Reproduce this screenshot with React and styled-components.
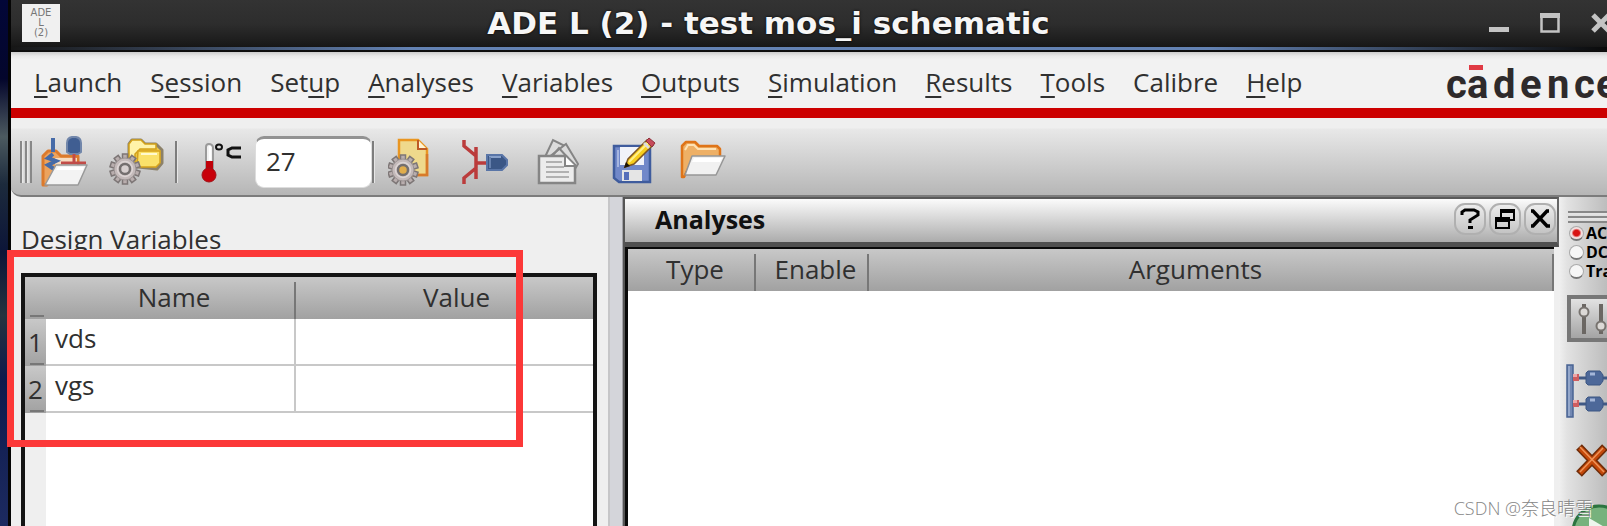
import React from "react";
// styles
import styled, { createGlobalStyle } from "styled-components";

const menus = [
    ["", "L", "aunch"],
    ["S", "e", "ssion"],
    ["Set", "u", "p"],
    ["", "A", "nalyses"],
    ["", "V", "ariables"],
    ["", "O", "utputs"],
    ["", "S", "imulation"],
    ["", "R", "esults"],
    ["", "T", "ools"],
    ["Calibre", "", ""],
    ["", "H", "elp"]
];

const variables = [
    { id: 1, name: "vds", value: "" },
    { id: 2, name: "vgs", value: "" }
];

const App = () => {
    return (
        <>
            <GlobalStyle />
            <Desktop>
                <Window>
                    <TitleBar>
                        <AppBadge>
                            ADE
                            <br />L<br />
                            (2)
                        </AppBadge>
                        <h1>ADE L (2) - test mos_i schematic</h1>
                        <WindowControls>
                            <button aria-label="Minimize">
                                <MinimizeIcon />
                            </button>
                            <button aria-label="Maximize">
                                <MaximizeIcon />
                            </button>
                            <button aria-label="Close">
                                <CloseIcon />
                            </button>
                        </WindowControls>
                    </TitleBar>
                    <MenuBar>
                        <Menus>
                            {menus.map(([before, key, after]) => (
                                <button key={before + key + after}>
                                    {before}
                                    {key && <u>{key}</u>}
                                    {after}
                                </button>
                            ))}
                        </Menus>
                        <Logo />
                    </MenuBar>
                    <Toolbar />
                    <Main>
                        <VariablesPanel />
                        <Splitter />
                        <AnalysesPanel />
                        <SideBar />
                    </Main>
                </Window>
                <Highlight />
                <Watermark>CSDN @奈良晴雪</Watermark>
            </Desktop>
        </>
    );
};

const Toolbar = () => (
    <ToolRow>
        <Grip />
        <Tool $width={68} aria-label="Open design">
            <DesignIcon />
        </Tool>
        <Tool $width={75} aria-label="Setup folder">
            <FolderGearIcon />
        </Tool>
        <Divider />
        <TempLabel htmlFor="temperature" aria-label="Temperature">
            <ThermometerIcon />
        </TempLabel>
        <TempInput id="temperature" defaultValue="27" />
        <Divider />
        <Tool $width={87} $start={13} aria-label="Setup analyses">
            <DocGearIcon />
        </Tool>
        <Tool $width={75} $start={0} aria-label="Edit variables">
            <PinIcon />
        </Tool>
        <Tool $width={75} $start={0} aria-label="Outputs">
            <StackIcon />
        </Tool>
        <Tool $width={68} $start={0} aria-label="Save state">
            <SaveIcon />
        </Tool>
        <Tool $width={68} $start={0} aria-label="Load state">
            <FolderIcon />
        </Tool>
    </ToolRow>
);

const VariablesPanel = () => (
    <Variables>
        <h2>Design Variables</h2>
        <VariablesFrame>
            <VariablesTable>
                <colgroup>
                    <col style={{ width: 21 }} />
                    <col style={{ width: 250 }} />
                    <col />
                </colgroup>
                <thead>
                    <tr>
                        <th className="corner"></th>
                        <th>Name</th>
                        <th className="last">Value</th>
                    </tr>
                </thead>
                <tbody>
                    {variables.map(row => (
                        <tr key={row.id}>
                            <th scope="row">{row.id}</th>
                            <td>{row.name}</td>
                            <td>{row.value}</td>
                        </tr>
                    ))}
                </tbody>
            </VariablesTable>
        </VariablesFrame>
    </Variables>
);

const AnalysesPanel = () => (
    <Analyses>
        <DockTitle>
            <h2>Analyses</h2>
            <DockButton aria-label="Help">
                <HelpIcon />
            </DockButton>
            <DockButton aria-label="Detach">
                <DetachIcon />
            </DockButton>
            <DockButton aria-label="Close">
                <CrossIcon />
            </DockButton>
        </DockTitle>
        <AnalysesFrame>
            <AnalysesTable>
                <colgroup>
                    <col style={{ width: 128 }} />
                    <col style={{ width: 113 }} />
                    <col />
                </colgroup>
                <thead>
                    <tr>
                        <th>Type</th>
                        <th>Enable</th>
                        <th className="arguments">Arguments</th>
                    </tr>
                </thead>
            </AnalysesTable>
        </AnalysesFrame>
    </Analyses>
);

const SideBar = () => (
    <Side>
        <SideGrip />
        <Radios>
            {["AC", "DC", "Tran"].map((kind, i) => (
                <label key={kind}>
                    <input type="radio" name="kind" defaultChecked={i === 0} />
                    {kind}
                </label>
            ))}
        </Radios>
        <SlidersButton aria-label="Edit sliders">
            <SlidersIcon />
        </SlidersButton>
        <SideButton aria-label="Edit outputs">
            <NetIcon />
        </SideButton>
        <SideButton $indent={10} aria-label="Delete">
            <DeleteIcon />
        </SideButton>
        <SideButton $indent={5} aria-label="Run">
            <RunIcon />
        </SideButton>
    </Side>
);

// icons
const MinimizeIcon = () => (
    <svg width="20" height="20" viewBox="0 0 20 20">
        <path d="M0 14h20v5H0z" fill="#c4c4c4" />
    </svg>
);

const MaximizeIcon = () => (
    <svg width="20" height="20" viewBox="0 0 20 20">
        <path d="M1.5 1v17.5h17V1" fill="none" stroke="#c4c4c4" strokeWidth="2.5" />
        <path d="M0 0h20v5H0z" fill="#c4c4c4" />
    </svg>
);

const CloseIcon = () => (
    <svg width="20" height="20" viewBox="0 0 20 20">
        <path d="M2 2l16 16M18 2L2 18" stroke="#c4c4c4" strokeWidth="5" />
    </svg>
);

const Logo = () => (
    <LogoSvg viewBox="0 0 190 40" role="img" aria-label="cadence">
        <text x="0 21 47 74 101 128 150" y="36">
            cadence
        </text>
        <path d="M23 3h14v5H23z" fill="#e03a44" />
    </LogoSvg>
);

const Gear = ({ x, y, hole }) => (
    <g transform={`translate(${x} ${y})`}>
        {[0, 36, 72, 108, 144].map(angle => (
            <path
                key={angle}
                d="M-2.5 -15h5v30h-5z"
                transform={`rotate(${angle})`}
                fill="#b9aeae"
                stroke="#7d7676"
                strokeWidth="1.5"
            />
        ))}
        <circle r="11" fill="#c4baba" stroke="#9a9292" />
        <circle r="5" fill={hole} stroke="#746f6f" strokeWidth="2.5" />
        <circle r="7.5" fill="none" stroke="#ddd5d5" strokeWidth="1.5" />
    </g>
);

const OpenFolder = () => (
    <>
        <path
            d="M2 36V5l4-4h9l4 4h18l3 3v10H13L4 36z"
            fill="#eeb066"
            stroke="#df7418"
            strokeWidth="2.5"
            strokeLinejoin="round"
        />
        <path d="M5 9l3-5h6l4 4h18" fill="none" stroke="#ffe2b4" strokeWidth="2" />
        <path
            d="M12 15h33l-9 19H5z"
            fill="#f1f1f1"
            stroke="#969696"
            strokeWidth="1.5"
            strokeLinejoin="round"
        />
        <path d="M14 17h28l-2 4H12z" fill="#fff" />
    </>
);

const FolderIcon = () => (
    <svg width="46" height="50" viewBox="0 -4 46 50">
        <OpenFolder />
    </svg>
);

const DesignIcon = () => (
    <svg width="48" height="52" viewBox="0 0 48 52">
        <path
            d="M2 49V20l5-5h8l5 5h17v12H16L6 49z"
            fill="#eca35e"
            stroke="#dc7a2c"
            strokeWidth="3"
            strokeLinejoin="round"
        />
        <path d="M14 22h22v8H14z" fill="#f7dcc0" />
        <path
            d="M12 2v14M12 18l-5 4 8 3-8 4 6 4"
            fill="none"
            stroke="#466ba8"
            strokeWidth="4"
        />
        <path
            d="M26 16V7q0-5 5-6h4q5 1 5 6v9l-3 2h-8z"
            fill="#405e92"
            stroke="#7186aa"
            strokeWidth="2"
        />
        <path d="M33 18v9M20 27h25" stroke="#c14c48" strokeWidth="3" />
        <path
            d="M15 29h31l-9 20H4z"
            fill="#f3f3f3"
            stroke="#999"
            strokeWidth="1.5"
            strokeLinejoin="round"
        />
        <path d="M17 31h26l-1 3H15z" fill="#fff" />
    </svg>
);

const FolderGearIcon = () => (
    <svg width="56" height="50" viewBox="0 0 56 50">
        <path
            d="M20 29V7l3-4h9l4 4h11l6 6v13l-5 6z"
            fill="#ecc747"
            stroke="#8c8169"
            strokeWidth="3"
            strokeLinejoin="round"
        />
        <path
            d="M20 28V7l3-4h9l4 4h11v5H31l-5 5v12z"
            fill="#fff3a8"
            stroke="#d2a118"
            strokeWidth="1.5"
        />
        <path
            d="M29 14h22v12l-4 4H28z"
            fill="#fbe16a"
            stroke="#d5a11c"
            strokeWidth="1.5"
        />
        <path d="M32 17h16" stroke="#fff9cf" strokeWidth="2" />
        <Gear x={16} y={32} hole="#d8d0d0" />
    </svg>
);

const ThermometerIcon = () => (
    <svg width="42" height="42" viewBox="0 0 42 42">
        <path
            d="M5 28V6q0-3 3-3t4 3v22z"
            fill="#f2f2f2"
            stroke="#9a9a9a"
            strokeWidth="2"
        />
        <path d="M5 20h7v10H5z" fill="#c00008" />
        <circle cx="8" cy="34" r="7" fill="#c8000a" stroke="#a01318" />
        <path d="M9 5v14" stroke="#fff" strokeWidth="2" />
        <ellipse cx="18" cy="6" rx="3" ry="2.5" fill="none" stroke="#111" strokeWidth="2" />
        <path
            d="M40 7H31l-4 2v5l4 2h9"
            fill="none"
            stroke="#111"
            strokeWidth="3"
        />
    </svg>
);

const DocGearIcon = () => (
    <svg width="44" height="50" viewBox="0 0 44 50">
        <path
            d="M11 3h19l9 9v26H11z"
            fill="#efd98c"
            stroke="#e99622"
            strokeWidth="2.5"
        />
        <path d="M30 3v9h9" fill="#fff4d4" stroke="#bd5a26" strokeWidth="2" />
        <path d="M39 17v21H24" fill="none" stroke="#d87a2a" strokeWidth="2.5" />
        <Gear x={15} y={33} hole="#e1ad4c" />
    </svg>
);

const PinIcon = () => (
    <svg width="48" height="50" viewBox="0 0 48 50">
        <path
            d="M2 3v6l12 10v12L2 41v6M14 10v32M14 26h12"
            fill="none"
            stroke="#bb3c3c"
            strokeWidth="3.5"
        />
        <path
            d="M25 18h15l5 5v5l-5 5H25z"
            fill="#3b5786"
            stroke="#5975a7"
            strokeWidth="2"
        />
        <path d="M27 20h12" stroke="#88a1ca" strokeWidth="2" />
        <path d="M28 20v11" stroke="#6781ad" strokeWidth="2" />
    </svg>
);

const StackIcon = () => (
    <svg width="44" height="50" viewBox="0 0 44 50">
        <g fill="#dcdcdc" stroke="#858585" strokeWidth="2">
            <path d="M8 20L16 3l14 7-6 14z" />
            <path d="M12 20L29 7l12 20-5 8z" />
            <path d="M16 18l6-7 9 10" fill="none" />
            <path d="M2 19h27l9 9v18H2z" fill="#ececec" strokeWidth="2.5" />
            <path d="M28 19v10h10" fill="#fff" />
        </g>
        <path d="M9 25h16M9 30h18M9 35h23M9 40h23" stroke="#b1b1b1" strokeWidth="2" />
    </svg>
);

const SaveIcon = () => (
    <svg width="44" height="50" viewBox="0 0 44 50">
        <path
            d="M2 9h36v36H7l-5-4z"
            fill="#7188c9"
            stroke="#3f5c9d"
            strokeWidth="2.5"
        />
        <path d="M8 10h24v18H8z" fill="#f1f3f9" />
        <path d="M6 13v17" stroke="#a6b6e0" strokeWidth="2" />
        <path d="M10 33h20v11H10z" fill="#e5e5e5" />
        <path d="M12 35h5v8h-5z" fill="#566fba" />
        <path d="M13 30l3-8L35 3l6 5-19 19z" fill="#f8cd1d" stroke="#7d5524" strokeWidth="1.5" />
        <path d="M17 25L36 6" stroke="#fff08a" strokeWidth="2" />
        <path d="M34 4l3-3 6 5-3 4z" fill="#c64a5a" stroke="#8f2f3c" />
        <path d="M31 7l2-2 5 5-2 2z" fill="#ddd" />
        <path d="M12 31l2-6 4 4z" fill="#1a1208" />
    </svg>
);

const HelpIcon = () => (
    <svg width="22" height="22" viewBox="0 0 22 22">
        <path
            d="M3 7V4l3-2h9l4 2v3l-8 5v3"
            fill="none"
            stroke="#000"
            strokeWidth="3"
        />
        <path d="M9 18h5v3H9z" />
    </svg>
);

const DetachIcon = () => (
    <svg width="22" height="22" viewBox="0 0 22 22">
        <path
            d="M7 9V2h13v10h-5M2 12v8h13v-8z"
            fill="none"
            stroke="#000"
            strokeWidth="2"
        />
        <path d="M6 1h15v4H6zM1 9h15v5H1z" />
    </svg>
);

const CrossIcon = () => (
    <svg width="22" height="22" viewBox="0 0 22 22">
        <path
            d="M2 3h2l14 15h3M20 3h-2L4 18H2"
            fill="none"
            stroke="#000"
            strokeWidth="3.5"
        />
    </svg>
);

const SlidersIcon = () => (
    <svg width="46" height="34" viewBox="0 0 46 34">
        <path d="M13 2v30M30 2v30" stroke="#6b6763" strokeWidth="4" />
        <circle cx="13" cy="10" r="4.5" fill="#dcd9d6" stroke="#77736f" strokeWidth="2" />
        <circle cx="30" cy="24" r="4.5" fill="#dcd9d6" stroke="#77736f" strokeWidth="2" />
    </svg>
);

const NetIcon = () => (
    <svg width="48" height="54" viewBox="0 0 48 54">
        <path d="M1 1h6v52H1z" fill="#7288b3" stroke="#4a6494" strokeWidth="1.5" />
        <path d="M3 2v50" stroke="#a2b3d3" strokeWidth="1.5" />
        {[14, 40].map(y => (
            <g key={y} transform={`translate(0 ${y})`}>
                <path d="M12 0h9M36 0h10" stroke="#405985" strokeWidth="3" />
                <path d="M7-4h6v7H7z" fill="#cf5d60" />
                <path d="M7-4h4v3H7z" fill="#eda6a8" />
                <path
                    d="M20-5l2-2h12l3 4v6l-3 4H22l-2-2z"
                    fill="#4d6899"
                    stroke="#3c5683"
                />
                <path d="M24-4h5" stroke="#a4b6d8" strokeWidth="3" />
            </g>
        ))}
    </svg>
);

const DeleteIcon = () => (
    <svg width="34" height="34" viewBox="0 0 34 34">
        <path d="M3 3l26 27M29 3L3 30" stroke="#6e2b08" strokeWidth="8" />
        <path d="M4 4l24 25M28 4L4 29" stroke="#c4480a" strokeWidth="5" />
        <path d="M4 3l24 25M27 4L4 28" stroke="#ee9358" strokeWidth="1.5" />
    </svg>
);

const RunIcon = () => (
    <svg width="56" height="56" viewBox="0 0 56 56">
        <circle cx="28" cy="28" r="26" fill="#77b27d" stroke="#2c7440" strokeWidth="3" />
        <path d="M18 14l24 14-24 14z" fill="#edf7ed" />
    </svg>
);

const GlobalStyle = createGlobalStyle`
    * {
        box-sizing: border-box;
        margin: 0;
    }
    body {
        overflow: hidden;
        background: #0b1330;
        color: #303030;
        font-family: "Open Sans", "Noto Sans", sans-serif;
        font-size: 26px;
    }
    button {
        padding: 0;
        border: none;
        background: none;
        color: inherit;
        font: inherit;
    }
    svg {
        display: block;
    }
`;

const Desktop = styled.div`
    position: relative;
    height: 100vh;
    padding-left: 8px;
    overflow: hidden;
    background: linear-gradient(
        #020638,
        #04062c 15%,
        #4c5a60 26%,
        #1c2a3c 35%,
        #0c1538 48%,
        #26343f 60%,
        #0e1a4c 72%,
        #1c2a60
    );
`;

const Window = styled.div`
    display: flex;
    flex-direction: column;
    height: 100%;
    border-left: 3px solid #050505;
    background: #efefef;
`;

const TitleBar = styled.header`
    display: flex;
    flex: none;
    align-items: center;
    height: 52px;
    padding: 0 0 6px 11px;
    background:
        linear-gradient(to right, #161616, #6382b3 25%, #6382b3 75%, #0a0a0a)
            0 47px / 100% 3px no-repeat,
        linear-gradient(#333 0, #2d2d2d 24px, #191919 45px, #0c0c0c 52px);
    color: #fff;
    h1 {
        flex: 1;
        padding-right: 12px;
        color: #f6f6f6;
        font-family: "DejaVu Sans", sans-serif;
        font-size: 31px;
        line-height: 40px;
        text-align: center;
        text-shadow: 0 0 3px #000;
    }
`;

const AppBadge = styled.div`
    width: 38px;
    height: 38px;
    padding-top: 4px;
    background: #f0f0f0;
    color: #777;
    font-family: "DejaVu Sans", sans-serif;
    font-size: 10px;
    line-height: 10px;
    text-align: center;
`;

const WindowControls = styled.div`
    display: flex;
    gap: 31px;
    margin-right: -4px;
`;

const MenuBar = styled.nav`
    display: flex;
    flex: none;
    align-items: center;
    justify-content: space-between;
    height: 66px;
    padding: 4px 0 0 23px;
    overflow: hidden;
    border-bottom: 10px solid #c00;
    background: linear-gradient(#ccc, #e9e9e9 4px, #f2f2f2 8px);
`;

const Menus = styled.div`
    display: flex;
    gap: 28px;
    u {
        text-decoration-thickness: 2px;
        text-decoration-skip-ink: none;
        text-underline-offset: 4px;
    }
`;

const LogoSvg = styled.svg`
    flex: none;
    width: 190px;
    height: 40px;
    margin-right: -29px;
    fill: #2e2a2b;
    font-family: Roboto, sans-serif;
    font-size: 40px;
    font-weight: bold;
`;

const ToolRow = styled.div`
    display: flex;
    flex: none;
    align-items: center;
    height: 79px;
    padding: 10px 0 0 9px;
    border-bottom: 2px solid #7c7c7c;
    border-bottom-left-radius: 10px;
    background: linear-gradient(#efefef 10px, #e8e8e8 11px, #b6b6b6);
`;

const Grip = styled.div`
    width: 12px;
    height: 42px;
    background: repeating-linear-gradient(
        to right,
        #888 0,
        #888 2px,
        #eee 2px,
        #ccc 5px
    );
`;

const Tool = styled.button`
    display: flex;
    width: ${props => props.$width}px;
    padding-left: ${props => props.$start ?? 9}px;
`;

const Divider = styled.div`
    width: 3px;
    height: 42px;
    border-right: 1px solid #e6e6e6;
    background: #7d7d7d;
`;

const TempLabel = styled.label`
    padding: 0 12px 0 23px;
`;

const TempInput = styled.input`
    width: 117px;
    height: 52px;
    padding: 0 10px 4px;
    border: 1px solid #ddd;
    border-top: 3px solid #929292;
    border-radius: 9px;
    background: #fff;
    color: #303030;
    font: inherit;
    outline: none;
`;

const Main = styled.main`
    display: flex;
    flex: 1;
    min-height: 0;
`;

const Variables = styled.section`
    display: flex;
    flex: none;
    flex-direction: column;
    width: 38%;
    max-width: 597px;
    padding: 24px 11px 0 10px;
    h2 {
        margin-bottom: 16px;
        font-size: 26px;
        font-weight: 400;
        line-height: 36px;
    }
`;

const VariablesFrame = styled.div`
    flex: 1;
    border: 4px solid #141414;
    border-bottom: none;
    background: linear-gradient(to right, #efefef 21px, #fff 21px);
`;

const VariablesTable = styled.table`
    width: 100%;
    border-collapse: separate;
    border-spacing: 0;
    table-layout: fixed;
    th {
        padding: 0 0 2px;
        font-weight: 400;
        line-height: 36px;
    }
    thead tr {
        height: 42px;
        background: linear-gradient(#c8c8c8, #a1a1a1);
    }
    thead th {
        padding-left: 6px;
        background: linear-gradient(#777, #777) 100% 100% / 2px 37px no-repeat;
    }
    thead .corner {
        padding-left: 0;
        background: linear-gradient(#777, #777) 5px 38px / 14px 2px no-repeat;
    }
    thead .last {
        padding-left: 24px;
        background: none;
    }
    tbody th {
        height: 47px;
        background:
            linear-gradient(#777, #777) 5px 44px / 14px 2px no-repeat,
            linear-gradient(#c8c8c8, #a1a1a1);
    }
    td {
        padding: 0 9px 7px;
        border-right: 2px solid #c8c8c8;
        border-bottom: 2px solid #c8c8c8;
        background: #fff;
        line-height: 36px;
    }
    td:last-child {
        border-right: none;
    }
`;

const Splitter = styled.div`
    flex: none;
    width: 15px;
    border-right: 1px solid #a2a2a8;
    border-left: 2px solid #c6c6c8;
    background: #d4d5da;
`;

const Analyses = styled.section`
    display: flex;
    flex: 1;
    flex-direction: column;
    min-width: 0;
    border-left: 2px solid #555;
`;

const DockTitle = styled.div`
    display: flex;
    align-items: center;
    gap: 3px;
    height: 50px;
    padding: 0 1px 4px 30px;
    border-top: 2px solid #5a5a5a;
    border-right: 2px solid #666;
    border-bottom: 5px solid #505050;
    background: linear-gradient(#fbfbfb, #acacac);
    h2 {
        flex: 1;
        color: #111;
        font-size: 25px;
        line-height: 34px;
    }
`;

const DockButton = styled.button`
    display: flex;
    align-items: center;
    justify-content: center;
    width: 32px;
    height: 32px;
    border: 2px solid #b0b0b0;
    border-radius: 11px;
    background: linear-gradient(#ececec, #c4c4c4);
`;

const AnalysesFrame = styled.div`
    flex: 1;
    margin-right: 5px;
    border-top: 2px solid #0a0a0a;
    border-left: 3px solid #0a0a0a;
    background: #fff;
`;

const AnalysesTable = styled.table`
    width: 100%;
    border-spacing: 0;
    table-layout: fixed;
    tr {
        height: 42px;
        background: linear-gradient(#c8c8c8, #a1a1a1);
    }
    th {
        padding: 0 0 2px 6px;
        background: linear-gradient(#777, #777) 100% 100% / 2px 37px no-repeat;
        font-weight: 400;
        line-height: 36px;
    }
    .arguments {
        padding: 0 32px 2px 0;
    }
`;

const Side = styled.aside`
    display: flex;
    flex: none;
    flex-direction: column;
    align-items: flex-start;
    width: 48px;
    padding: 14px 0 0 7px;
    overflow: hidden;
    background: linear-gradient(to right, #f0f0f0, #e2e2e2 8px, #bdbdbd);
`;

const SideGrip = styled.div`
    flex: none;
    width: 100%;
    height: 12px;
    margin-left: 2px;
    background: repeating-linear-gradient(#888 0, #888 2px, #e6e6e6 2px, #ddd 5px);
`;

const Radios = styled.div`
    flex: none;
    padding: 1px 0 0 3px;
    label {
        display: flex;
        align-items: center;
        gap: 2px;
        height: 19px;
        color: #000;
        font-size: 16px;
        font-weight: 700;
        line-height: 19px;
    }
    input {
        flex: none;
        width: 15px;
        height: 15px;
        appearance: none;
        border: 1px solid #aaa;
        border-bottom: 2px solid #777;
        border-radius: 50%;
        background: #f6f6f6;
    }
    input:checked {
        background: radial-gradient(#d91212 3px, #f2dede 5px);
    }
`;

const SlidersButton = styled.button`
    flex: none;
    width: 56px;
    height: 47px;
    margin: 14px 0 22px 1px;
    border: 4px solid #777;
    border-right: none;
    background: linear-gradient(#e2e2e2, #a4a4a4);
`;

const SideButton = styled.button`
    flex: none;
    margin: 0 0 26px ${props => props.$indent ?? 0}px;
`;

// sits over the variables table
const Highlight = styled.div`
    position: absolute;
    top: 250px;
    left: 7px;
    width: 516px;
    height: 197px;
    border: 7px solid #fc3838;
    pointer-events: none;
`;

const Watermark = styled.div`
    position: absolute;
    right: 14px;
    bottom: 5px;
    color: #858585;
    font-family: "Open Sans", "Noto Sans CJK SC", sans-serif;
    font-size: 18px;
    font-weight: 300;
    line-height: 26px;
    text-shadow: 1px 1px 0 #fff;
`;

export default App;
